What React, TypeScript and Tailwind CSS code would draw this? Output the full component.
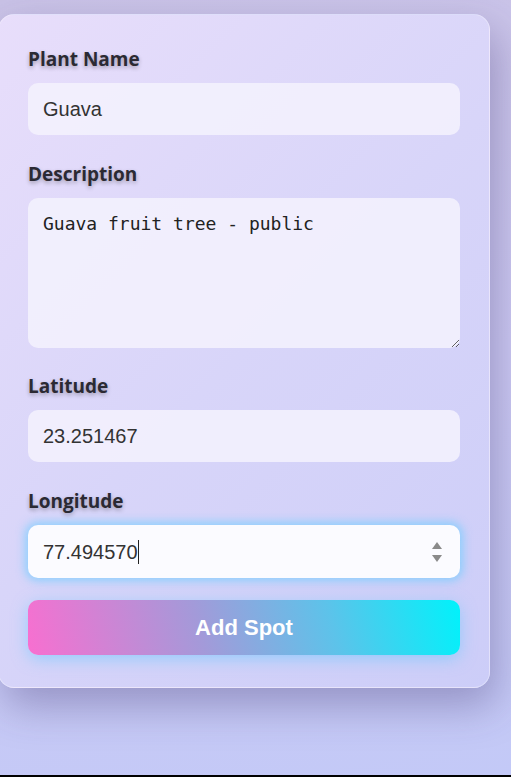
import React from 'react';

const labelCls =
  "block h-[27px] mb-[10px] text-[19px] leading-[27px] font-bold text-[#2b2a33] [text-shadow:0_2px_4px_rgba(0,0,0,0.3)] [font-family:'Open_Sans',sans-serif]";

const inputCls =
  "w-full h-[52px] rounded-[10px] bg-[#f3f1fd]/90 px-[15px] text-[20px] text-[#333] outline-none [font-family:'Liberation_Sans',Arial,sans-serif]";

export default function App() {
  return (
    <div className="w-[511px] h-[777px] overflow-hidden flex flex-col bg-[linear-gradient(170deg,#c9c2e6_0%,#cdcaf3_50%,#c3c9f7_100%)]">
      <div className="flex-1 pt-[14px]">
        <div className="ml-[-2px] w-[492px] rounded-[16px] bg-[linear-gradient(135deg,#e8defb_0%,#d8d5f9_50%,#cccdf8_100%)] px-[29px] pt-[31px] pb-[32px] shadow-[6px_18px_40px_rgba(60,50,110,0.35)] border border-white/30">
          <div className="mb-[26px]">
            <label className={labelCls}>Plant Name</label>
            <input className={inputCls} defaultValue="Guava" />
          </div>

          <div className="mb-[25px]">
            <label className={labelCls}>Description</label>
            <textarea
              className="block w-full h-[150px] rounded-[10px] bg-[#f3f1fd]/90 px-[15px] pt-[14px] text-[18px] leading-[24px] text-[#222] outline-none [font-family:'DejaVu_Sans_Mono',monospace]"
              defaultValue="Guava fruit tree - public"
            />
          </div>

          <div className="mb-[26px]">
            <label className={labelCls}>Latitude</label>
            <input className={inputCls} defaultValue="23.251467" />
          </div>

          <div className="mb-[22px]">
            <label className={labelCls}>Longitude</label>
            <div className="flex items-center h-[53px] rounded-[10px] bg-[#fbfbff] pl-[15px] pr-[17px] shadow-[0_0_10px_3px_rgba(110,205,255,0.7)] text-[20px] text-[#333] [font-family:'Liberation_Sans',Arial,sans-serif]">
              <span>77.494570</span>
              <span className="w-px h-[24px] bg-[#222]" />
              <span className="flex-1" />
              <svg width="12" height="22" viewBox="0 0 12 22" className="text-[#8a8a8a]">
                <path d="M6 1 L11 8 H1 Z" fill="currentColor" />
                <path d="M6 21 L11 14 H1 Z" fill="currentColor" />
              </svg>
            </div>
          </div>

          <button className="w-full h-[55px] rounded-[10px] bg-[linear-gradient(75deg,#f86fd0_0%,#a39ad9_40%,#5cc3ea_70%,#00f2fb_100%)] text-white text-[22px] font-bold shadow-[0_4px_16px_rgba(100,200,255,0.55)] [font-family:'Liberation_Sans',Arial,sans-serif]">
            Add Spot
          </button>
        </div>
      </div>
      <div className="h-[2px] bg-black" />
    </div>
  );
}
